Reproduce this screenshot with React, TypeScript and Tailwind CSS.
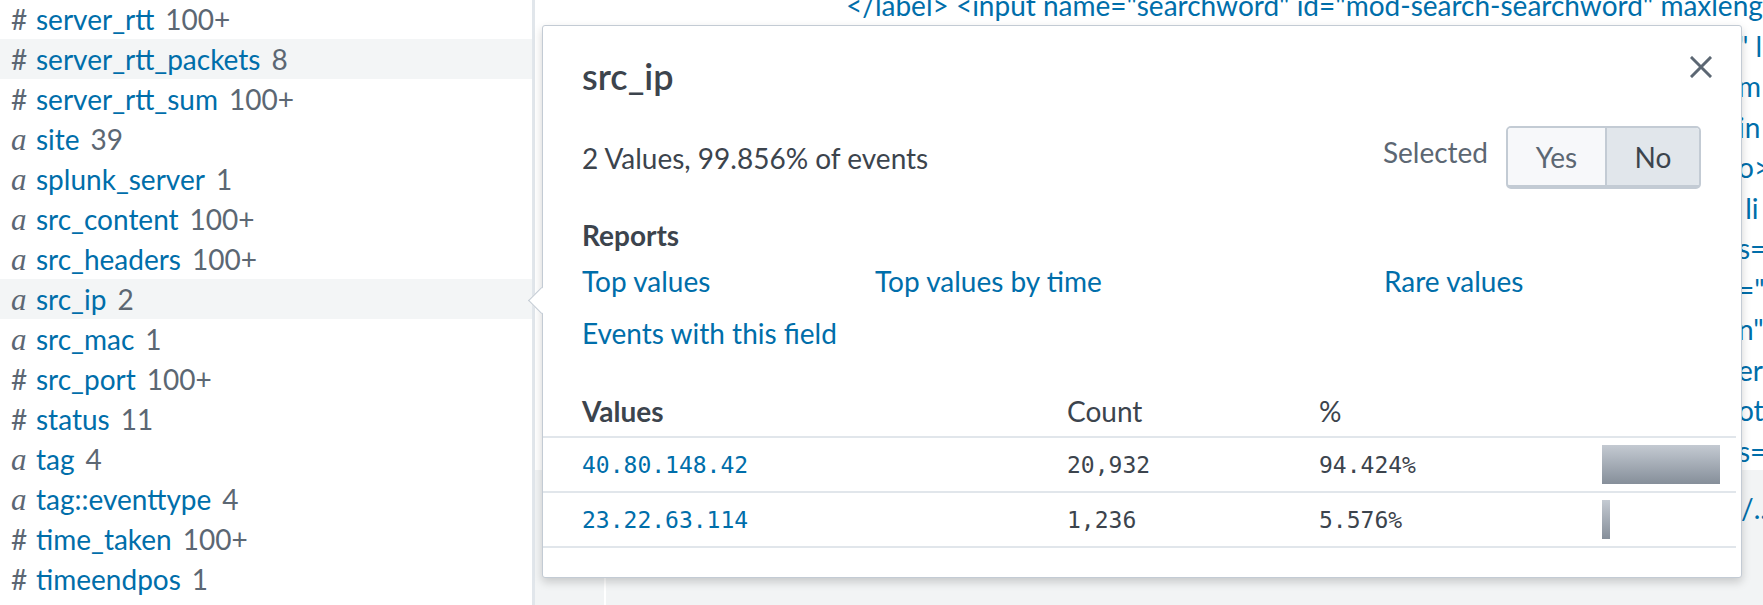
import React from 'react';

type Field = { t: '#' | 'a'; name: string; count: string; hl?: boolean };

const fields: Field[] = [
  { t: '#', name: 'server_rtt', count: '100+' },
  { t: '#', name: 'server_rtt_packets', count: '8', hl: true },
  { t: '#', name: 'server_rtt_sum', count: '100+' },
  { t: 'a', name: 'site', count: '39' },
  { t: 'a', name: 'splunk_server', count: '1' },
  { t: 'a', name: 'src_content', count: '100+' },
  { t: 'a', name: 'src_headers', count: '100+' },
  { t: 'a', name: 'src_ip', count: '2', hl: true },
  { t: 'a', name: 'src_mac', count: '1' },
  { t: '#', name: 'src_port', count: '100+' },
  { t: '#', name: 'status', count: '11' },
  { t: 'a', name: 'tag', count: '4' },
  { t: 'a', name: 'tag::eventtype', count: '4' },
  { t: '#', name: 'time_taken', count: '100+' },
  { t: '#', name: 'timeendpos', count: '1' },
];

const fragments: string[] = ['" l', 'm', 'in', 'o>', ' li', 's=', '="r', 'n"', 'er', 'ot', 's='];

function FieldRow({ f }: { f: Field }) {
  return (
    <div className={`flex h-[40px] items-center pl-[11px] whitespace-nowrap ${f.hl ? 'bg-[#f3f5f6]' : ''}`}>
      <span className="w-[25px] shrink-0 text-[#5c6773]">
        {f.t === '#' ? (
          <span>#</span>
        ) : (
          <span className="font-['Liberation_Serif',serif] italic text-[31px]">a</span>
        )}
      </span>
      <span className="text-[#006eaa]">{f.name}</span>
      <span className="ml-[11px] text-[#5c6773]">{f.count}</span>
    </div>
  );
}

function Popup() {
  return (
    <div className="absolute left-[7px] top-[25px] w-[1200px] h-[553px] bg-white border border-[#c3cbd4] rounded-[3px] shadow-[0_4px_10px_rgba(0,0,0,0.18)] text-[#3c444d]">
      <div className="absolute left-[-11px] top-[265px] w-[19px] h-[19px] bg-white border-l border-b border-[#c3cbd4] rotate-45" />
      <button className="absolute left-[1147px] top-[30px] w-[22px] h-[22px] flex items-center justify-center">
        <svg width="22" height="22" viewBox="0 0 22 22">
          <path d="M2 2 L20 20 M20 2 L2 20" stroke="#5c6773" strokeWidth="3" strokeLinecap="square" />
        </svg>
      </button>

      <div className="pl-[39px] pr-[40px] pt-[28px]">
        <div className="text-[36px] leading-[44px] font-semibold">src_ip</div>

        <div className="mt-[28px] h-[63px] flex items-center justify-between">
          <div>2 Values, 99.856% of events</div>
          <div className="flex items-center gap-[18px]">
            <span className="text-[#5c6773] mb-[12px]">Selected</span>
            <div className="flex h-[63px] rounded-[5px] border-2 border-b-[4px] border-[#c3cbd4] overflow-hidden">
              <div className="w-[99px] bg-[#f7f8fa] flex items-center justify-center border-r-2 border-[#c3cbd4] text-[#5c6773]">Yes</div>
              <div className="w-[92px] bg-[#e1e6eb] flex items-center justify-center">No</div>
            </div>
          </div>
        </div>

        <div className="mt-[26px] font-bold">Reports</div>
        <div className="mt-[6px] grid grid-cols-[293px_509px_1fr] gap-y-[12px] text-[#006eaa]">
          <span>Top values</span>
          <span>Top values by time</span>
          <span>Rare values</span>
          <span>Events with this field</span>
        </div>
      </div>

      <div className="mt-[32px] mr-[5px]">
        <div className="h-[53px] pl-[39px] grid grid-cols-[485px_252px_283px_1fr] items-center border-b-2 border-[#e1e6eb]">
          <span className="font-bold">Values</span>
          <span>Count</span>
          <span>%</span>
          <span />
        </div>
        {[
          { v: '40.80.148.42', c: '20,932', p: '94.424%', w: 118 },
          { v: '23.22.63.114', c: '1,236', p: '5.576%', w: 8 },
        ].map((r) => (
          <div key={r.v} className="h-[55px] pl-[39px] grid grid-cols-[485px_252px_283px_1fr] items-center border-b-2 border-[#e1e6eb] font-['DejaVu_Sans_Mono',monospace] text-[23px]">
            <span className="text-[#006eaa]">{r.v}</span>
            <span>{r.c}</span>
            <span>{r.p}</span>
            <div className="h-[39px] bg-linear-to-b from-[#c4cad2] to-[#868f9a]" style={{ width: r.w }} />
          </div>
        ))}
      </div>
    </div>
  );
}

export default function App() {
  return (
    <div className="w-[1763px] h-[605px] overflow-hidden flex bg-white font-[Lato,sans-serif] text-[28px] leading-[40px]">
      <aside className="w-[532px] shrink-0 -mt-px">
        {fields.map((f) => (
          <FieldRow key={f.name} f={f} />
        ))}
      </aside>
      <div className="w-[3px] shrink-0 bg-[#e1e6eb]" />
      <main className="relative flex-1 min-w-0 flex flex-col">
        <div className="h-[470px] shrink-0 overflow-hidden text-[#006eaa] leading-[40.5px]">
          <div className="-mt-[15px] pl-[311px] whitespace-nowrap">
            {'</label> <input name="searchword" id="mod-search-searchword" maxlength'}
          </div>
          <div className="flex justify-end">
            <div className="w-[25px] overflow-hidden whitespace-pre">
              {fragments.map((f, i) => (
                <div key={i}>{f}</div>
              ))}
            </div>
          </div>
        </div>
        <div className="flex-1 bg-[#f2f4f5] flex">
          <div className="w-[69px] shrink-0" />
          <div className="w-[2px] shrink-0 bg-white" />
          <div className="flex-1" />
          <div className="w-[22px] overflow-hidden whitespace-pre text-[#006eaa] mt-[18px]">/..</div>
        </div>
        <Popup />
      </main>
    </div>
  );
}
